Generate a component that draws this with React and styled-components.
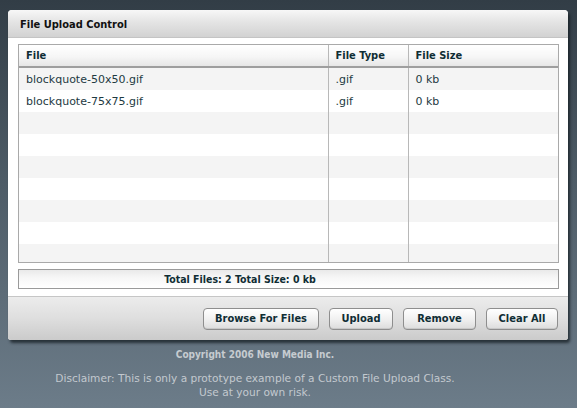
import styled, { createGlobalStyle } from "styled-components"

const GlobalStyle = createGlobalStyle`
  html, body {
    margin: 0;
    padding: 0;
    height: 100%;
  }
  body {
    background: linear-gradient(to bottom, #323d46 0%, #4e5c67 45%, #6c7c89 100%);
    font-family: "DejaVu Sans", Verdana, sans-serif;
    font-size: 11px;
    color: #1a363e;
  }
`

const boldFont = `"DejaVu Sans Condensed", "DejaVu Sans", Tahoma, sans-serif`

const Page = styled.div`
  width: 577px;
  height: 408px;
  padding: 10px 9px 0 8px;
  box-sizing: border-box;
  display: flex;
  flex-direction: column;
`

const Panel = styled.div`
  background: #fff;
  border-radius: 4px 4px 3px 3px;
  box-shadow: 2px 3px 3px rgba(20, 28, 34, 0.75);
  display: flex;
  flex-direction: column;
  overflow: hidden;
`

const Header = styled.div`
  height: 28px;
  padding: 2px 12px 0;
  display: flex;
  align-items: center;
  font-family: ${boldFont};
  font-weight: bold;
  color: #111;
  background: linear-gradient(to bottom, #f7f7f7 0%, #e4e4e4 45%, #d2d2d2 100%);
  border-bottom: 1px solid #c4c4c4;
  box-sizing: border-box;
`

const Body = styled.div`
  padding: 6px 9px 7px 10px;
  display: flex;
  flex-direction: column;
  gap: 6px;
`

const TableBox = styled.div`
  border: 1px solid #a9a9a9;
  height: 219px;
  overflow: hidden;
  box-sizing: border-box;
`

const Table = styled.table`
  width: 100%;
  border-collapse: collapse;
  table-layout: fixed;
`

const Th = styled.th`
  height: 22px;
  padding: 0 7px;
  box-sizing: border-box;
  text-align: left;
  font-family: ${boldFont};
  font-weight: bold;
  color: #0f2d34;
  background: linear-gradient(to bottom, #ffffff 0%, #f6f6f6 55%, #e6e6e6 100%);
  border-bottom: 2px solid #9e9e9e;
  border-left: ${({ $first }) => ($first ? "none" : "1px solid #b8b8b8")};
  width: ${({ $w }) => $w || "auto"};
`

const Row = styled.tr`
  background: ${({ $odd }) => ($odd ? "#f4f4f4" : "#ffffff")};
`

const Td = styled.td`
  height: 22px;
  padding: 0 7px;
  color: #1e3a42;
  border-left: ${({ $first }) => ($first ? "none" : "1px solid #b8b8b8")};
  white-space: nowrap;
`

const TotalBar = styled.div`
  height: 20px;
  padding-right: 97px;
  border: 1px solid #9a9a9a;
  box-sizing: border-box;
  display: flex;
  align-items: center;
  justify-content: center;
  font-family: ${boldFont};
  font-size: 10.5px;
  font-weight: bold;
  color: #0f2d34;
  background: linear-gradient(to bottom, #e9e9e9 0%, #f6f6f6 40%, #ffffff 100%);
`

const Footer = styled.div`
  height: 44px;
  padding: 0 10px 0 0;
  display: flex;
  align-items: center;
  justify-content: flex-end;
  gap: 10px;
  border-top: 1px solid #c6c6c6;
  background: linear-gradient(to bottom, #ececec 0%, #dedede 50%, #cbcbcb 100%);
  box-sizing: border-box;
`

const Button = styled.button`
  height: 22px;
  width: ${({ $w }) => $w}px;
  padding: 0;
  border: 1px solid #8e8e8e;
  border-radius: 4px;
  background: linear-gradient(to bottom, #ffffff 0%, #f1f1f1 50%, #dcdcdc 100%);
  box-shadow: inset 0 -1px 0 #c8c8c8;
  font-family: ${boldFont};
  font-size: 11px;
  font-weight: bold;
  color: #0f2d34;
  cursor: pointer;
`

const Notes = styled.div`
  padding-right: 66px;
  text-align: center;
`

const Copyright = styled.div`
  margin-top: 9px;
  font-family: ${boldFont};
  font-size: 10px;
  font-weight: bold;
  color: #c6cbd0;
`

const Disclaimer = styled.div`
  margin-top: 11px;
  font-size: 10.6px;
  line-height: 14px;
  color: #c3c9cf;
`

const files = [
  { name: "blockquote-50x50.gif", type: ".gif", size: "0 kb" },
  { name: "blockquote-75x75.gif", type: ".gif", size: "0 kb" },
]

const rows = Array.from({ length: 9 }, (_, i) => files[i] || null)

export default function App() {
  return (
    <>
      <GlobalStyle />
      <Page>
        <Panel>
          <Header>File Upload Control</Header>
          <Body>
            <TableBox>
              <Table>
                <thead>
                  <tr>
                    <Th $first>File</Th>
                    <Th $w="80px">File Type</Th>
                    <Th $w="150px">File Size</Th>
                  </tr>
                </thead>
                <tbody>
                  {rows.map((f, i) => (
                    <Row key={i} $odd={i % 2 === 0}>
                      <Td $first>{f ? f.name : ""}</Td>
                      <Td>{f ? f.type : ""}</Td>
                      <Td>{f ? f.size : ""}</Td>
                    </Row>
                  ))}
                </tbody>
              </Table>
            </TableBox>
            <TotalBar>Total Files: 2 Total Size: 0 kb</TotalBar>
          </Body>
          <Footer>
            <Button $w={116}>Browse For Files</Button>
            <Button $w={64}>Upload</Button>
            <Button $w={73}>Remove</Button>
            <Button $w={72}>Clear All</Button>
          </Footer>
        </Panel>
        <Notes>
          <Copyright>Copyright 2006 New Media Inc.</Copyright>
          <Disclaimer>
            Disclaimer: This is only a prototype example of a Custom File Upload Class.
            <br />
            Use at your own risk.
          </Disclaimer>
        </Notes>
      </Page>
    </>
  )
}
